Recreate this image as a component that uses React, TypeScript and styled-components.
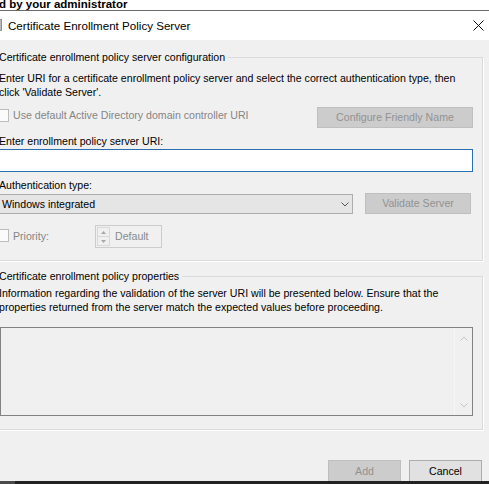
import React from 'react'
import styled, { createGlobalStyle } from 'styled-components'

const GlobalStyle = createGlobalStyle`
  html, body {
    margin: 0;
    padding: 0;
  }
  body {
    background: #f0f0f0;
    font-family: 'Liberation Sans', Arial, sans-serif;
    font-size: 10.6px;
    line-height: 13px;
    color: #000;
  }
`

const Window = styled.div`
  width: 489px;
  height: 484px;
  overflow: hidden;
  display: flex;
  flex-direction: column;
  background: #f0f0f0;
`

const BehindStrip = styled.div`
  height: 10px;
  flex: none;
  background: #fff;
  border-bottom: 1px solid #6b6b6b;
  overflow: hidden;
  font-weight: bold;
  font-size: 11.5px;
  line-height: 8px;
  padding-left: 0;
  text-indent: -1px;
  white-space: nowrap;
`

const TitleBar = styled.div`
  height: 29px;
  flex: none;
  background: #fff;
  display: flex;
  align-items: center;
`

const TitleIcon = styled.svg`
  margin-left: -13px;
  flex: none;
`

const TitleText = styled.div`
  font-size: 11.6px;
  line-height: 14px;
  margin-left: 5px;
  flex: 1;
  white-space: nowrap;
`

const CloseButton = styled.svg`
  margin-right: 5px;
  flex: none;
`

const Body = styled.div`
  flex: 1;
  min-height: 0;
  overflow: hidden;
  padding-top: 11px;
  display: flex;
  flex-direction: column;
`

const Group = styled.fieldset<{ $pb: number; $mt?: number }>`
  margin: ${(p) => p.$mt ?? 0}px 6px 0 -8px;
  padding: 0 9px ${(p) => p.$pb}px 6px;
  border: 1px solid #dadada;
  box-shadow: 1px 1px 0 #fff;
  min-width: 0;
  display: flex;
  flex-direction: column;
`

const Legend = styled.legend`
  padding: 0 3px 0 0;
  line-height: 13px;
  white-space: nowrap;
`

const Para = styled.div<{ $mt: number }>`
  margin-top: ${(p) => p.$mt}px;
  line-height: 13.5px;
`

const Label = styled.div<{ $mt: number }>`
  margin-top: ${(p) => p.$mt}px;
  line-height: 13px;
  white-space: nowrap;
`

const Row = styled.div<{ $mt: number }>`
  margin-top: ${(p) => p.$mt}px;
  display: flex;
  align-items: flex-start;
`

const CheckBox = styled.span<{ $mt: number }>`
  width: 13px;
  height: 13px;
  box-sizing: border-box;
  margin-left: -3px;
  margin-top: ${(p) => p.$mt}px;
  border: 1px solid #bcbcbc;
  background: #fbfbfb;
  flex: none;
`

const CheckLabel = styled.span<{ $mt: number; $w?: number }>`
  margin-top: ${(p) => p.$mt}px;
  margin-left: 4px;
  color: #858585;
  line-height: 13px;
  white-space: nowrap;
  flex: ${(p) => (p.$w ? 'none' : '1')};
  width: ${(p) => (p.$w ? `${p.$w}px` : 'auto')};
`

const Button = styled.div<{ $w: number; $h: number; $disabled?: boolean; $mr?: number }>`
  width: ${(p) => p.$w}px;
  height: ${(p) => p.$h}px;
  box-sizing: border-box;
  margin-right: ${(p) => p.$mr ?? 0}px;
  flex: none;
  display: flex;
  align-items: center;
  justify-content: center;
  background: ${(p) => (p.$disabled ? '#cccccc' : '#e1e1e1')};
  border: 1px solid ${(p) => (p.$disabled ? '#bfbfbf' : '#adadad')};
  color: ${(p) => (p.$disabled ? '#929292' : '#000')};
  white-space: nowrap;
`

const TextBox = styled.div`
  margin-top: 1px;
  margin-left: -4px;
  height: 23px;
  box-sizing: border-box;
  border: 1px solid #2a6fb0;
  background: #fff;
  display: flex;
  align-items: center;
  padding-left: 3px;
`

const Caret = styled.span`
  width: 1px;
  height: 14px;
  background: #000;
`

const Select = styled.div`
  margin-top: 1px;
  margin-left: 0;
  width: 354px;
  height: 20px;
  box-sizing: border-box;
  flex: none;
  border: 1px solid #adadad;
  background: #e5e5e5;
  display: flex;
  align-items: center;
  padding: 0 3px 0 2px;
`

const SelectValue = styled.span`
  flex: 1;
  white-space: nowrap;
`

const Spacer = styled.div`
  flex: 1;
`

const Spinner = styled.div`
  width: 67px;
  height: 23px;
  box-sizing: border-box;
  flex: none;
  border: 1px solid #cccccc;
  background: #f0f0f0;
  display: flex;
  align-items: center;
  padding-left: 1px;
`

const SpinButtons = styled.div`
  width: 13px;
  height: 19px;
  display: flex;
  flex-direction: column;
  flex: none;
`

const SpinButton = styled.div`
  flex: 1;
  border: 1px solid #d9d9d9;
  display: flex;
  align-items: center;
  justify-content: center;
  & + & {
    border-top: none;
  }
`

const SpinValue = styled.span`
  margin-left: 5px;
  color: #8a8a8a;
`

const ListArea = styled.div`
  margin-top: 13px;
  margin-left: 1px;
  height: 89px;
  box-sizing: border-box;
  border: 1px solid #828282;
  background: #f0f0f0;
  display: flex;
  justify-content: flex-end;
`

const ScrollBar = styled.div`
  width: 17px;
  border-left: 1px solid #f6f6f6;
  display: flex;
  flex-direction: column;
  justify-content: space-between;
  align-items: center;
  padding: 8px 0 7px;
`

const Footer = styled.div`
  margin-top: 30px;
  display: flex;
  justify-content: flex-end;
  gap: 8px;
  padding-right: 7px;
`

const DarkBar = styled.div`
  height: 3px;
  flex: none;
  background: linear-gradient(to right, #4a4a4a 15px, #222 15px);
`

const Chevron = ({ up, color }: { up?: boolean; color: string }) => (
  <svg width="8" height="5" viewBox="0 0 8 5">
    <polyline
      points={up ? '0.5,4.5 4,1 7.5,4.5' : '0.5,0.5 4,4 7.5,0.5'}
      fill="none"
      stroke={color}
      strokeWidth="1"
    />
  </svg>
)

const Arrow = ({ up }: { up?: boolean }) => (
  <svg width="5" height="3" viewBox="0 0 5 3">
    <polygon points={up ? '0,3 2.5,0 5,3' : '0,0 2.5,3 5,0'} fill="#a8a8a8" />
  </svg>
)

export default function App() {
  return (
    <>
      <GlobalStyle />
      <Window>
        <BehindStrip>d by your administrator</BehindStrip>
        <TitleBar>
          <TitleIcon width="16" height="16" viewBox="0 0 16 16">
            <rect x="1.5" y="1.5" width="13" height="11" fill="#fafafa" stroke="#9a9a9a" />
            <line x1="12" y1="3" x2="12" y2="11" stroke="#c8c8c8" />
            <line x1="14" y1="2" x2="14" y2="12" stroke="#7d7d7d" />
          </TitleIcon>
          <TitleText>Certificate Enrollment Policy Server</TitleText>
          <CloseButton width="11" height="11" viewBox="0 0 11 11">
            <line x1="0.5" y1="0.5" x2="10.5" y2="10.5" stroke="#111" strokeWidth="1" />
            <line x1="10.5" y1="0.5" x2="0.5" y2="10.5" stroke="#111" strokeWidth="1" />
          </CloseButton>
        </TitleBar>
        <Body>
          <Group $pb={12}>
            <Legend>Certificate enrollment policy server configuration</Legend>
            <Para $mt={8}>
              Enter URI for a certificate enrollment policy server and select the correct
              authentication type, then
              <br />
              click 'Validate Server'.
            </Para>
            <Row $mt={8}>
              <CheckBox $mt={2} />
              <CheckLabel $mt={2}>Use default Active Directory domain controller URI</CheckLabel>
              <Button $w={156} $h={21} $disabled>
                Configure Friendly Name
              </Button>
            </Row>
            <Label $mt={7}>Enter enrollment policy server URI:</Label>
            <TextBox>
              <Caret />
            </TextBox>
            <Label $mt={7}>Authentication type:</Label>
            <Row $mt={1}>
              <Select>
                <SelectValue>Windows integrated</SelectValue>
                <Chevron color="#555" />
              </Select>
              <Spacer />
              <Button $w={106} $h={21} $disabled $mr={2}>
                Validate Server
              </Button>
            </Row>
            <Row $mt={11}>
              <CheckBox $mt={4} />
              <CheckLabel $mt={5} $w={82}>
                Priority:
              </CheckLabel>
              <Spinner>
                <SpinButtons>
                  <SpinButton>
                    <Arrow up />
                  </SpinButton>
                  <SpinButton>
                    <Arrow />
                  </SpinButton>
                </SpinButtons>
                <SpinValue>Default</SpinValue>
              </Spinner>
            </Row>
          </Group>
          <Group $pb={13} $mt={9}>
            <Legend>Certificate enrollment policy properties</Legend>
            <Para $mt={4}>
              Information regarding the validation of the server URI will be presented below. Ensure
              that the
              <br />
              properties returned from the server match the expected values before proceeding.
            </Para>
            <ListArea>
              <ScrollBar>
                <Chevron up color="#c2c2c2" />
                <Chevron color="#c2c2c2" />
              </ScrollBar>
            </ListArea>
          </Group>
          <Footer>
            <Button $w={73} $h={22} $disabled>
              Add
            </Button>
            <Button $w={73} $h={22}>
              Cancel
            </Button>
          </Footer>
        </Body>
        <DarkBar />
      </Window>
    </>
  )
}
